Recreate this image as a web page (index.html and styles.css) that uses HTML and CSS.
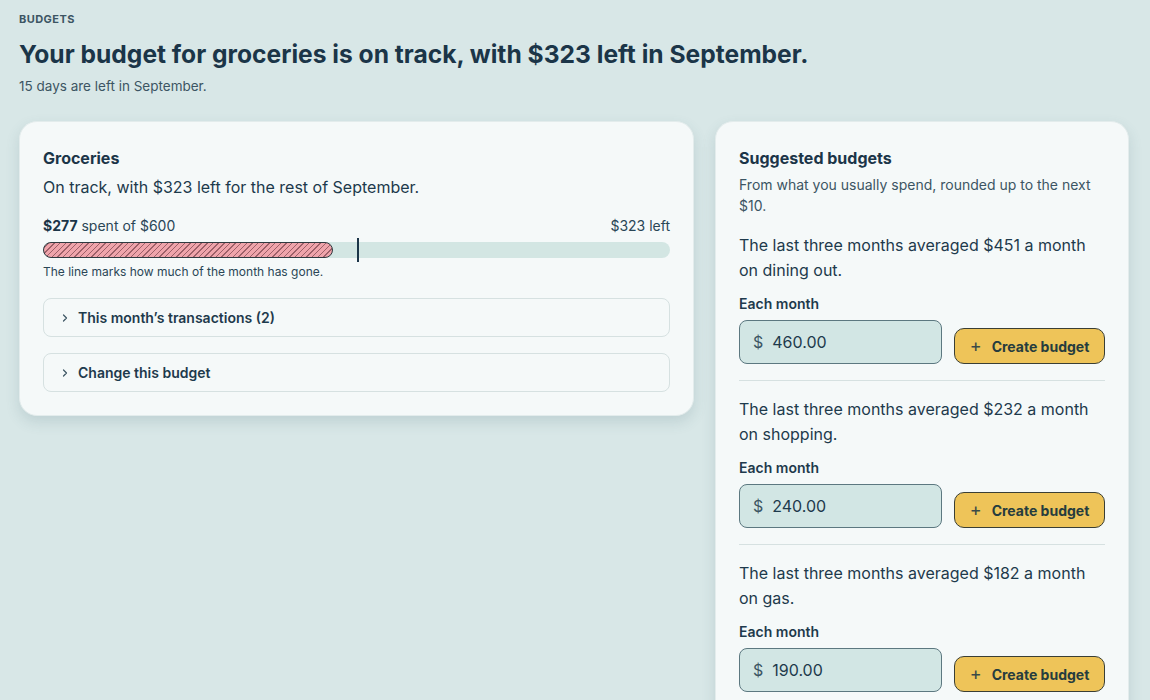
FILE: index.html
```html
<!DOCTYPE html>
<html lang="en">
<head>
<meta charset="utf-8">
<title>Budgets</title>
<link rel="stylesheet" href="styles.css">
</head>
<body>
<main class="page">
  <header class="head">
    <div class="eyebrow">BUDGETS</div>
    <h1 class="title">Your budget for groceries is on track, with $323 left in September.</h1>
    <p class="sub">15 days are left in September.</p>
  </header>
  <div class="cols">
    <section class="card card-main">
      <h2 class="card-title">Groceries</h2>
      <p class="status">On track, with $323 left for the rest of September.</p>
      <div class="meter-row">
        <span><b>$277</b> spent of $600</span>
        <span>$323 left</span>
      </div>
      <div class="meter">
        <div class="meter-fill" style="width:46.2%"></div>
        <div class="meter-mark" style="left:50%"></div>
      </div>
      <p class="note">The line marks how much of the month has gone.</p>
      <div class="acc acc-first">
        <svg class="chev" viewBox="0 0 10 10" width="10" height="10"><path d="M3.5 2 L6.5 5 L3.5 8" fill="none" stroke="currentColor" stroke-width="1.2" stroke-linecap="round" stroke-linejoin="round"/></svg>
        <span>This month’s transactions (2)</span>
      </div>
      <div class="acc">
        <svg class="chev" viewBox="0 0 10 10" width="10" height="10"><path d="M3.5 2 L6.5 5 L3.5 8" fill="none" stroke="currentColor" stroke-width="1.2" stroke-linecap="round" stroke-linejoin="round"/></svg>
        <span>Change this budget</span>
      </div>
    </section>
    <section class="card card-side">
      <h2 class="card-title">Suggested budgets</h2>
      <p class="side-sub">From what you usually spend, rounded up to the next $10.</p>
      <div class="sugg">
        <p class="sugg-text">The last three months averaged $451 a month on dining out.</p>
        <div class="field-label">Each month</div>
        <div class="field-row">
          <div class="input"><span class="cur">$</span><span>460.00</span></div>
          <button class="btn"><span class="plus">+</span>Create budget</button>
        </div>
      </div>
      <div class="sugg">
        <p class="sugg-text">The last three months averaged $232 a month on shopping.</p>
        <div class="field-label">Each month</div>
        <div class="field-row">
          <div class="input"><span class="cur">$</span><span>240.00</span></div>
          <button class="btn"><span class="plus">+</span>Create budget</button>
        </div>
      </div>
      <div class="sugg">
        <p class="sugg-text">The last three months averaged $182 a month on gas.</p>
        <div class="field-label">Each month</div>
        <div class="field-row">
          <div class="input"><span class="cur">$</span><span>190.00</span></div>
          <button class="btn"><span class="plus">+</span>Create budget</button>
        </div>
      </div>
    </section>
  </div>
</main>
</body>
</html>
```

FILE: styles.css
```css
* { box-sizing: border-box; }
html, body { margin: 0; padding: 0; }
body {
  background: #d8e7e7;
  color: #1d3a4c;
  font-family: "Inter", "Noto Sans", sans-serif;
  height: 700px;
  overflow: hidden;
}
.page { padding: 12px 21px 0 19px; }
.eyebrow {
  font-size: 11px;
  font-weight: 700;
  letter-spacing: 0.04em;
  color: #3c5563;
  line-height: 14px;
}
.title {
  margin: 12px 0 0;
  font-size: 24.6px;
  font-weight: 700;
  line-height: 32px;
  color: #1b3548;
}
.sub {
  margin: 7px 0 0;
  font-size: 13.5px;
  line-height: 18px;
  color: #3c5563;
}
.cols {
  display: grid;
  grid-template-columns: 675px 414px;
  column-gap: 21px;
  margin-top: 26px;
  align-items: start;
}
.card {
  background: #f5f9f9;
  border-radius: 18px;
  border: 1px solid #e3ecec;
  box-shadow: 0 6px 14px rgba(60, 100, 110, 0.16);
  padding: 25px 23px 23px;
}
.card-title {
  margin: 0;
  font-size: 16px;
  font-weight: 650;
  line-height: 22px;
  color: #1b3548;
}
.status {
  margin: 7px 0 0;
  font-size: 16px;
  line-height: 22px;
}
.meter-row {
  display: flex;
  justify-content: space-between;
  margin-top: 19px;
  font-size: 14px;
  line-height: 18px;
  color: #2a4656;
}
.meter-row b { color: #1b3548; font-weight: 650; }
.meter {
  position: relative;
  margin-top: 7px;
  height: 16px;
  border-radius: 8px;
  background: #d3e6e3;
}
.meter-fill {
  height: 16px;
  border-radius: 8px;
  border: 1px solid #2f3a40;
  background-color: #efa4ab;
  background-image: repeating-linear-gradient(135deg, transparent 0 3px, rgba(90,40,50,0.55) 3px 4px);
}
.meter-mark {
  position: absolute;
  top: -4px;
  width: 2px;
  height: 24px;
  background: #1b3548;
}
.note {
  margin: 6px 0 0;
  font-size: 12px;
  line-height: 16px;
  color: #2a4656;
}
.acc {
  display: flex;
  align-items: center;
  gap: 8px;
  height: 39px;
  margin-top: 16px;
  padding: 0 16px;
  border: 1px solid #d6e1e1;
  border-radius: 8px;
  font-size: 14px;
  font-weight: 600;
  color: #1e3a4c;
}
.acc-first { margin-top: 18px; }
.chev { color: #3c5563; }
.side-sub {
  margin: 5px 0 0;
  font-size: 14px;
  line-height: 21px;
  color: #3c5563;
}
.sugg { padding-bottom: 16px; border-bottom: 1px solid #d6e1e1; margin-top: 17px; }
.sugg + .sugg { margin-top: 16px; }
.sugg:last-child { border-bottom: none; }
.sugg-text {
  margin: 0;
  font-size: 16px;
  line-height: 25px;
  color: #1e3a4c;
}
.field-label {
  margin-top: 12px;
  font-size: 14px;
  font-weight: 600;
  line-height: 18px;
  color: #1e3a4c;
}
.field-row {
  display: flex;
  align-items: flex-end;
  justify-content: space-between;
  margin-top: 7px;
}
.input {
  width: 203px;
  height: 44px;
  background: #d2e6e4;
  border: 1px solid #5c7880;
  border-radius: 8px;
  display: flex;
  align-items: center;
  gap: 9px;
  padding: 0 13px;
  font-size: 16px;
  color: #1e3a4c;
}
.cur { color: #3c5563; }
.btn {
  height: 36px;
  width: 151px;
  background: #eec459;
  border: 1px solid #3a3f35;
  border-radius: 10px;
  font-family: inherit;
  font-size: 14px;
  font-weight: 650;
  color: #263c3e;
  display: flex;
  align-items: center;
  justify-content: center;
  gap: 10px;
  padding: 0;
}
.plus { font-weight: 400; font-size: 18px; line-height: 1; color: #3a4a48; }
```
